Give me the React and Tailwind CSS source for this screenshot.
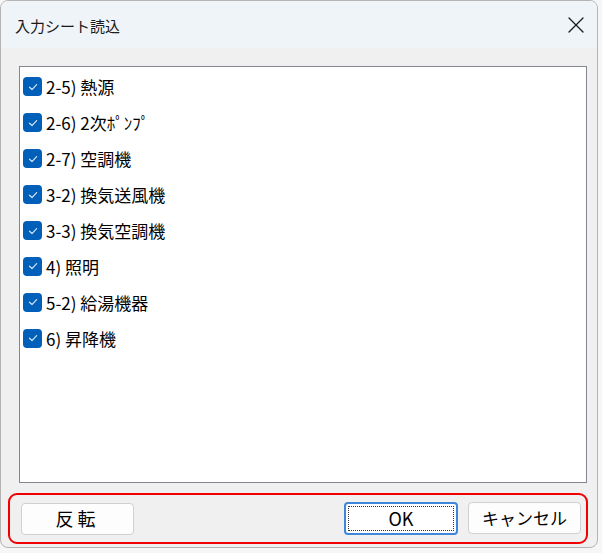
import { useState } from "react";

const ITEMS = [
  "2-5) 熱源",
  "2-6) 2次ﾎﾟﾝﾌﾟ",
  "2-7) 空調機",
  "3-2) 換気送風機",
  "3-3) 換気空調機",
  "4) 照明",
  "5-2) 給湯機器",
  "6) 昇降機",
];

const FONT = { fontFamily: '"Noto Sans CJK JP", "Noto Sans", sans-serif' };

function CheckBox({ checked }) {
  return (
    <span
      className={`flex h-[19px] w-[19px] shrink-0 items-center justify-center rounded-[4px] ${
        checked ? "bg-[#005fb8]" : "border border-[#8a8a8a] bg-white"
      }`}
    >
      {checked ? (
        <svg width="12" height="12" viewBox="0 0 12 12" fill="none">
          <path d="M2.5 6.3 L5 8.6 L9.6 3.6" stroke="#cfe0f3" strokeWidth="1.3" strokeLinecap="round" strokeLinejoin="round" />
        </svg>
      ) : null}
    </span>
  );
}

export default function App() {
  const [checked, setChecked] = useState(ITEMS.map(() => true));

  function toggle(index) {
    setChecked((prev) => prev.map((v, i) => (i === index ? !v : v)));
  }

  function invert() {
    setChecked((prev) => prev.map((v) => !v));
  }

  return (
    <div className="h-[553px] w-[602px] bg-[#f6f6f6]" style={FONT}>
      <div className="flex h-[548px] w-[598px] flex-col overflow-hidden rounded-lg border border-[#b4b4b4] bg-[#f0f0f0]">
        <div className="flex h-[47px] shrink-0 items-center justify-between bg-[#eff4f9] pl-[14px] pr-[12px]">
          <span className="pt-[3px] text-[15px] text-[#1a1a1a]">入力シート読込</span>
          <svg width="18" height="18" viewBox="0 0 18 18" fill="none">
            <path d="M2 2 L16 16 M16 2 L2 16" stroke="#1a1a1a" strokeWidth="1.3" strokeLinecap="round" />
          </svg>
        </div>

        <div className="ml-[18px] mr-[10px] mt-[18px] h-[417px] border border-[#828790] bg-white pt-[2px]">
          {ITEMS.map((item, index) => (
            <button
              className="flex h-[35.9px] items-center gap-[4px] pl-[3px] text-[17px] leading-none text-black"
              key={item}
              onClick={() => toggle(index)}
              type="button"
            >
              <CheckBox checked={checked[index]} />
              <span>{item}</span>
            </button>
          ))}
        </div>

        <div className="ml-[7px] mr-[9px] mt-[10px] flex h-[51px] items-center justify-between rounded-[9px] border-2 border-[#f00000] pl-[11px] pr-[5px]">
          <button
            className="flex h-[32px] w-[113px] items-center justify-center rounded-[4px] border border-[#d0d0d0] bg-[#fdfdfd] text-[18px] tracking-[4px] text-black"
            onClick={invert}
            type="button"
          >
            反転
          </button>
          <div className="flex gap-[10px]">
            <button
              className="flex h-[33px] w-[114px] items-center justify-center rounded-[4px] border-2 border-[#3d86d9] bg-white p-[2px] text-[18px] text-black"
              type="button"
            >
              <span className="flex h-full w-full items-center justify-center border border-dotted border-[#333]">
                OK
              </span>
            </button>
            <button
              className="flex h-[32px] w-[113px] items-center justify-center rounded-[4px] border border-[#d0d0d0] bg-[#fdfdfd] text-[17px] text-black"
              type="button"
            >
              キャンセル
            </button>
          </div>
        </div>
      </div>
    </div>
  );
}
